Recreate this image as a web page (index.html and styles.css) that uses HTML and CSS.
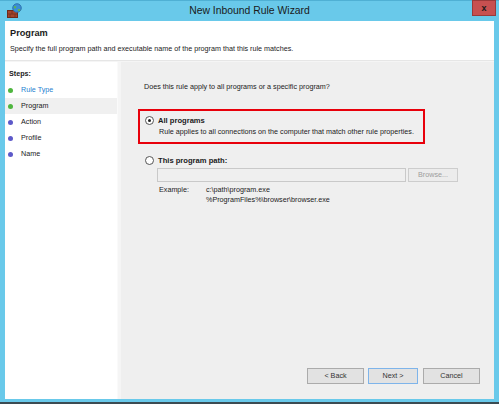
FILE: index.html
```html
<!DOCTYPE html>
<html>
<head>
    <meta charset="utf-8">
    <title>New Inbound Rule Wizard</title>
    <link rel="stylesheet" href="styles.css">
</head>
<body>
<div class="window">
    <div class="titlebar">
        <svg class="appIcon" width="16" height="16" viewBox="0 0 16 16">
            <rect x="0.5" y="7.5" width="10" height="7" fill="#a5442c" stroke="#6e2a1a"/>
            <line x1="1" y1="11" x2="10" y2="11" stroke="#7a3320"/>
            <line x1="5" y1="8" x2="5" y2="11" stroke="#7a3320"/>
            <line x1="3" y1="11" x2="3" y2="14" stroke="#7a3320"/>
            <line x1="8" y1="11" x2="8" y2="14" stroke="#7a3320"/>
            <circle cx="10" cy="5" r="4.3" fill="#3b8fd4" stroke="#2467a4" stroke-width="0.8"/>
            <path d="M7.2 3.2 C8.5 2.6 9.6 3.6 9 4.8 C8.4 5.8 7.2 5.4 6.8 4.6 Z" fill="#63b84a"/>
            <path d="M11 6.2 C12.2 5.8 13.6 6.2 13.2 7.4 C12.4 8.6 11 8.2 10.8 7.2 Z" fill="#63b84a"/>
        </svg>
        <span class="title">New Inbound Rule Wizard</span>
        <span class="closeBtn">x</span>
    </div>
    <div class="client">
        <div class="header">
            <div class="pageTitle">Program</div>
            <div class="pageDesc">Specify the full program path and executable name of the program that this rule matches.</div>
        </div>
        <div class="content">
            <div class="steps">
                <div class="stepsHead">Steps:</div>
                <div class="step link"><i class="dot green"></i>Rule Type</div>
                <div class="step current"><i class="dot green"></i>Program</div>
                <div class="step"><i class="dot purple"></i>Action</div>
                <div class="step"><i class="dot purple"></i>Profile</div>
                <div class="step"><i class="dot purple"></i>Name</div>
            </div>
            <div class="main">
                <div class="question">Does this rule apply to all programs or a specific program?</div>
                <div class="choice highlight">
                    <div class="optRow"><span class="radio checked"></span><b>All programs</b></div>
                    <div class="optDesc">Rule applies to all connections on the computer that match other rule properties.</div>
                </div>
                <div class="choice">
                    <div class="optRow"><span class="radio"></span><b>This program path:</b></div>
                    <div class="pathRow">
                        <span class="textBox"></span>
                        <span class="btn disabled">Browse...</span>
                    </div>
                    <div class="example">
                        <span class="exLabel">Example:</span>
                        <span class="exPaths">c:\path\program.exe<br>%ProgramFiles%\browser\browser.exe</span>
                    </div>
                </div>
                <div class="footer">
                    <span class="btn">&lt; Back</span>
                    <span class="btn default">Next &gt;</span>
                    <span class="btn cancel">Cancel</span>
                </div>
            </div>
        </div>
    </div>
</div>
</body>
</html>
```

FILE: styles.css
```css
html, body{
    margin: 0;
    padding: 0;
}
body{
    width: 499px;
    height: 404px;
    overflow: hidden;
    font-family: "Liberation Sans", Arial, sans-serif;
    font-size: 7.2px;
    color: #1b1b1b;
}
.window{
    height: 404px;
    box-sizing: border-box;
    background: #69c9ea;
    border-top: 1px solid #4fb0d4;
    border-bottom: 2px solid #3b4b52;
    padding: 0 5px 3px 5px;
    display: flex;
    flex-direction: column;
}
.titlebar{
    height: 20px;
    display: flex;
    align-items: flex-start;
    position: relative;
}
.appIcon{
    margin: 2px 0 0 2px;
}
.title{
    position: absolute;
    left: 0;
    right: 0;
    top: 4px;
    text-align: center;
    font-size: 10.4px;
    color: #1a1a1a;
}
.closeBtn{
    position: absolute;
    right: -2px;
    top: -1px;
    width: 22px;
    height: 14px;
    background: #c75050;
    border: 1px solid #9a3a3a;
    color: #1a1a1a;
    font-weight: bold;
    font-size: 9px;
    line-height: 14px;
    text-align: center;
}
.client{
    flex: 1;
    background: #f5f5f5;
    display: flex;
    flex-direction: column;
}
.header{
    height: 40px;
    box-sizing: border-box;
    background: #fff;
    border-bottom: 1px solid #e6e6e6;
    padding: 5px 0 0 5px;
}
.pageTitle{
    font-weight: bold;
    font-size: 9.2px;
    line-height: 14px;
}
.pageDesc{
    margin-top: 4px;
    line-height: 10px;
}
.content{
    flex: 1;
    display: flex;
    padding-top: 1px;
}
.steps{
    width: 112px;
    background: #fff;
    margin-right: 3px;
    border-right: 1px solid #fafafa;
}
.stepsHead{
    font-weight: bold;
    line-height: 14px;
    padding: 5px 0 1px 4px;
}
.step{
    height: 16px;
    line-height: 16px;
    display: flex;
    align-items: center;
    padding-left: 3px;
}
.step.link{
    color: #1f7fd0;
}
.step.current{
    background: #f0f0f0;
}
.dot{
    width: 5px;
    height: 5px;
    border-radius: 50%;
    margin-right: 8px;
}
.dot.green{
    background: #4fb63f;
}
.dot.purple{
    background: #5d59c9;
}
.main{
    flex: 1;
    background: #efefef;
    display: flex;
    flex-direction: column;
    padding-left: 17px;
}
.question{
    margin: 20px 0 0 6px;
    line-height: 10px;
}
.choice{
    padding: 4px 0 5px 0;
    border: 2px solid transparent;
}
.choice.highlight{
    width: 283px;
    margin-top: 17px;
    border-color: #e8000b;
}
.optRow{
    display: flex;
    align-items: center;
    height: 10px;
}
.optRow b{
    font-size: 7.6px;
}
.radio{
    width: 7px;
    height: 7px;
    border: 1px solid #555;
    border-radius: 50%;
    background: #fff;
    margin: 0 4px 0 5px;
    position: relative;
}
.radio.checked::after{
    content: "";
    position: absolute;
    left: 2px;
    top: 2px;
    width: 3px;
    height: 3px;
    border-radius: 50%;
    background: #222;
}
.optDesc{
    margin: 1px 0 0 19px;
    line-height: 11px;
}
.choice + .choice{
    margin-top: 5px;
}
.pathRow{
    display: flex;
    gap: 2px;
    margin: 3px 0 0 17px;
}
.textBox{
    flex-shrink: 0;
    width: 247px;
    height: 12px;
    background: #efefef;
    border: 1px solid #c9c9c9;
}
.btn{
    height: 12px;
    line-height: 12px;
    border: 1px solid #ababab;
    background: #e2e2e2;
    text-align: center;
    font-size: 7.2px;
}
.btn.disabled{
    width: 48px;
    color: #9d9d9d;
    background: #ececec;
    border-color: #cdcdcd;
}
.example{
    display: flex;
    margin: 3px 0 0 19px;
    line-height: 10px;
}
.exLabel{
    width: 47px;
}
.footer{
    margin-top: auto;
    display: flex;
    justify-content: flex-end;
    gap: 4px;
    padding: 0 14px 15px 0;
}
.footer .btn{
    width: 55px;
    height: 14px;
    line-height: 14px;
    color: #333;
}
.footer .btn.default{
    width: 48px;
    border-color: #7eb4ea;
    margin-right: 1px;
}
```
